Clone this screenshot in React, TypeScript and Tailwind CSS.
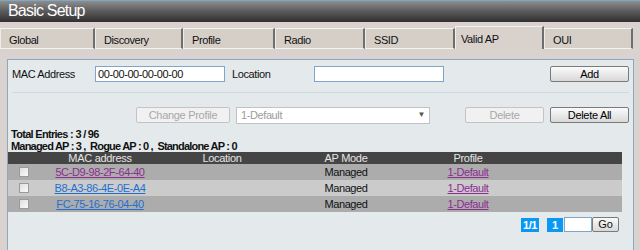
import React from 'react'

const tabs = [
  { label: 'Global', w: 'w-[95px]' },
  { label: 'Discovery', w: 'w-[88px]' },
  { label: 'Profile', w: 'w-[92px]' },
  { label: 'Radio', w: 'w-[90px]' },
  { label: 'SSID', w: 'w-[90px]' },
  { label: 'Valid AP', w: 'w-[89px]', active: true },
  { label: 'OUI', w: 'w-[89px]' },
]

const rows = [
  { mac: '5C-D9-98-2F-64-40', visited: true },
  { mac: 'B8-A3-86-4E-0E-A4', visited: false },
  { mac: 'FC-75-16-76-04-40', visited: false },
]

function Btn({ children, w, disabled }: { children: React.ReactNode; w: string; disabled?: boolean }) {
  return (
    <button
      className={
        w +
        ' h-[16px] rounded-[2px] border text-[11px] leading-[14px] tracking-[-0.3px] ' +
        (disabled
          ? 'border-[#c4c4c4] bg-[#f1f1f1] text-[#a8a8a8]'
          : 'border-[#7a7a7a] bg-gradient-to-b from-[#fbfbfb] to-[#d9d9d9] text-black')
      }
    >
      {children}
    </button>
  )
}

function Check() {
  return <span className="block w-[10px] h-[10px] border border-[#9a9a9a] bg-gradient-to-br from-[#e0e0e0] to-[#fafafa] mx-auto" />
}

export default function App() {
  return (
    <div className="w-[640px] h-[250px] overflow-hidden bg-[#dad2ce] font-['Liberation_Sans',Arial,sans-serif] text-[11px] text-[#111]">
      <div className="h-[22px] border-t border-[#7fa8c6] bg-gradient-to-b from-[#8e8e8e] via-[#5a5a5a] to-[#303030] pl-[8px] text-[16px] leading-[20px] text-white tracking-[-0.8px]">
        Basic Setup
      </div>
      <div className="flex items-end mt-[4px] h-[23px]">
        {tabs.map((t) =>
          t.active ? (
            <div key={t.label} className={t.w + ' h-[23px] bg-[#d9d1cc] border-t border-l border-[#f2efec] border-r-2 border-r-[#6e6e6e] pl-[5px] pt-[4px] tracking-[-0.4px]'}>
              {t.label}
            </div>
          ) : (
            <div key={t.label} className={t.w + ' h-[21px] bg-[#d5cfc8] border-y border-[#f5f3f0] border-l border-l-[#eeebe7] border-r-2 border-r-[#6e6e6e] pl-[8px] pt-[3px] tracking-[-0.4px]'}>
              {t.label}
            </div>
          )
        )}
      </div>
      <div className="h-[10px]" />
      <div className="ml-[7px] w-[627px] h-[200px] border border-[#8aa8c0] bg-[#e4e9ec] px-[4px] pt-[6px]">
        <div className="flex items-center h-[16px]">
          <span className="w-[83px] tracking-[-0.4px]">MAC Address</span>
          <input
            className="w-[130px] h-[16px] border border-[#7fa6c8] bg-white px-[2px] text-[11px] tracking-[-0.4px] outline-none"
            defaultValue="00-00-00-00-00-00"
          />
          <span className="ml-[7px] w-[82px] tracking-[-0.4px]">Location</span>
          <input className="w-[130px] h-[16px] border border-[#7fa6c8] bg-white outline-none" />
          <div className="flex-1" />
          <Btn w="w-[79px]">Add</Btn>
        </div>
        <div className="mt-[10px] h-px bg-[#cfd8de]" />
        <div className="flex items-center h-[16px] mt-[14px]">
          <div className="w-[124px]" />
          <Btn w="w-[94px]" disabled>Change Profile</Btn>
          <div className="ml-[6px] w-[194px] h-[17px] border border-[#c2c2c2] bg-white flex items-center px-[4px] text-[#9c9c9c] tracking-[-0.4px]">
            <span className="flex-1">1-Default</span>
            <span className="text-[8px] text-[#555]">▼</span>
          </div>
          <div className="flex-1" />
          <Btn w="w-[79px]" disabled>Delete</Btn>
          <div className="w-[6px]" />
          <Btn w="w-[79px]">Delete All</Btn>
        </div>
        <div className="-ml-[1px] mt-[5px] font-bold leading-[12px] tracking-[-0.7px]">Total Entries : 3 / 96</div>
        <div className="-ml-[1px] font-bold leading-[12px] tracking-[-0.8px] whitespace-pre">Managed AP : 3 ,  Rogue AP : 0 ,  Standalone AP : 0</div>
        <table className="-ml-[4px] w-[614px] border-collapse table-fixed">
          <colgroup>
            <col className="w-[32px]" />
            <col className="w-[120px]" />
            <col className="w-[124px]" />
            <col className="w-[124px]" />
            <col className="w-[120px]" />
            <col />
          </colgroup>
          <thead>
            <tr className="h-[12px] bg-[#454545] text-[#e6e6e6] leading-[12px] tracking-[-0.3px]">
              <th className="font-normal p-0" />
              <th className="font-normal p-0 text-center">MAC address</th>
              <th className="font-normal p-0 text-center">Location</th>
              <th className="font-normal p-0 text-center">AP Mode</th>
              <th className="font-normal p-0 text-center">Profile</th>
              <th className="p-0" />
            </tr>
          </thead>
          <tbody>
            {rows.map((r, i) => (
              <tr key={r.mac} className={(i % 2 === 1 ? 'bg-[#cbcbcb]' : 'bg-[#acacac]') + ' h-[16px] leading-[14px] tracking-[-0.4px]'}>
                <td className="p-0">
                  <Check />
                </td>
                <td className="p-0 text-center">
                  <a className={(r.visited ? 'text-[#8e2c93]' : 'text-[#1f6fd0]') + ' underline'}>{r.mac}</a>
                </td>
                <td className="p-0" />
                <td className="p-0 text-center">Managed</td>
                <td className="p-0 text-center">
                  <a className="text-[#8e2c93] underline">1-Default</a>
                </td>
                <td className="p-0" />
              </tr>
            ))}
          </tbody>
        </table>
        <div className="flex items-center justify-end w-[611px] mt-[5px] h-[15px] -ml-[4px]">
          <span className="w-[18px] h-[14px] bg-[#0a98f5] text-white font-bold text-center leading-[14px] tracking-[-0.5px]">1/1</span>
          <span className="ml-[8px] w-[16px] h-[14px] bg-[#0a98f5] text-white font-bold text-center leading-[14px]">1</span>
          <input className="ml-[1px] w-[28px] h-[15px] border border-[#7fa6c8] bg-white outline-none" />
          <button className="w-[27px] h-[15px] rounded-[2px] border border-[#7a7a7a] bg-gradient-to-b from-[#fbfbfb] to-[#d9d9d9] text-[11px] leading-[13px]">Go</button>
        </div>
      </div>
    </div>
  )
}
